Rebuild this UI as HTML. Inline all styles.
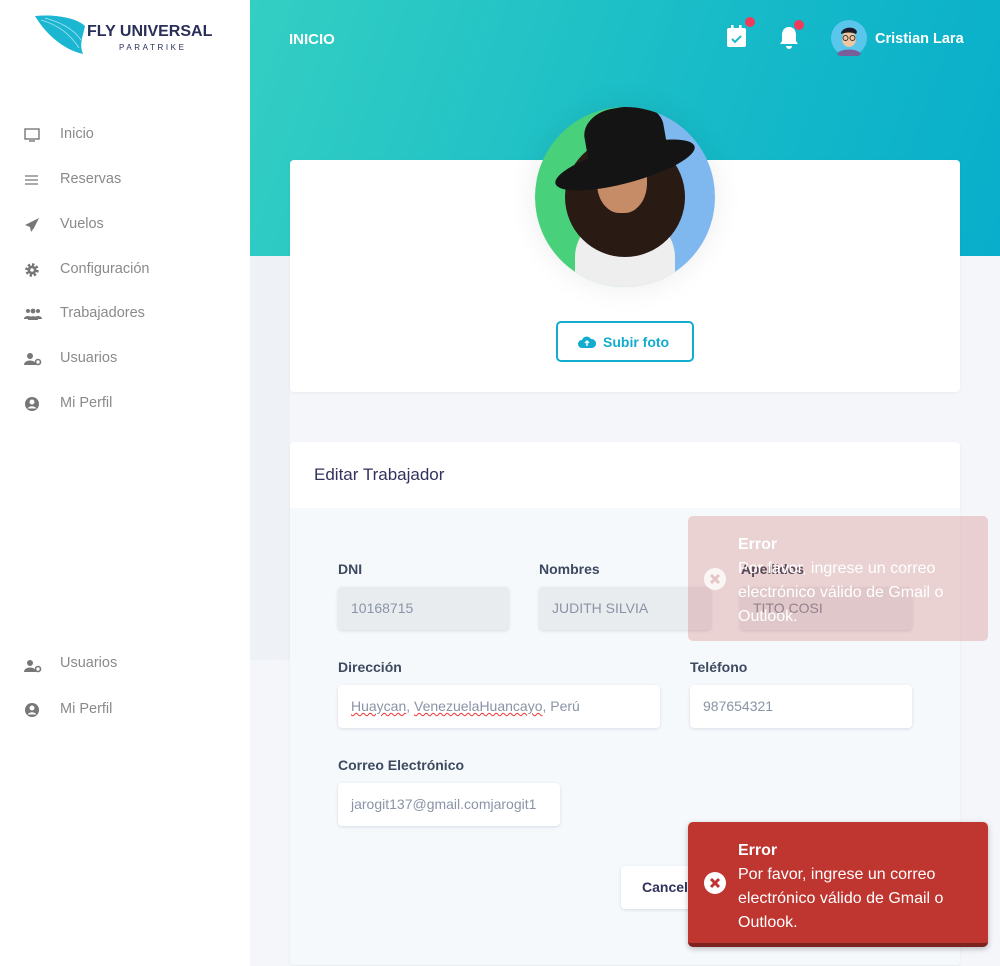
<!DOCTYPE html>
<html><head><meta charset="utf-8"><style>
*{box-sizing:border-box;margin:0;padding:0}
body{width:1000px;height:966px;overflow:hidden;font-family:"Liberation Sans",sans-serif;background:#f4f6fa;position:relative}
.side{position:absolute;left:0;top:0;width:250px;height:966px;background:#fff}
.nav{position:absolute;left:0;font-size:14.5px;color:#8a8a8a}
.nav svg{position:absolute;left:24px;top:-6px}
.nav span{position:absolute;left:60px;top:-7px;white-space:nowrap}
.hdr{position:absolute;left:250px;top:0;width:750px;height:256px;background:linear-gradient(110deg,#34cfc3,#16bac8 60%,#08aecb)}
.card{position:absolute;background:#fff;border-radius:4px;box-shadow:0 1px 3px rgba(0,0,0,.05)}
.lbl{position:absolute;font-size:14px;color:#3e4a60;font-weight:600}
.inp{position:absolute;height:43px;border-radius:4px;background:#fff;box-shadow:0 1px 3px rgba(50,50,93,.15);font-size:14px;color:#8a94a6;padding:13px 13px;white-space:nowrap;overflow:hidden}
.dis{background:#e9ecef}
.toast{position:absolute;left:688px;width:300px;border-radius:5px;color:#fff;font-size:16px;line-height:24px;padding:17px 20px 10px 50px}
.toast b{display:block}
.xi{position:absolute;left:15px;top:50%;margin-top:-12px}
</style></head><body>
<div class="side">
 <svg style="position:absolute;left:35px;top:14px" width="52" height="40" viewBox="0 0 52 40"><path d="M0 2 C20 0 42 4 50 12 C48 22 44 30 48 40 C30 36 12 22 0 2Z" fill="#1bb6d2"/><path d="M6 6 C20 10 34 18 44 34 M10 4 C24 8 38 14 46 26" stroke="#a9e3ee" stroke-width=".8" fill="none"/></svg>
 <div style="position:absolute;left:87px;top:23px;font-weight:700;font-size:16px;color:#2a2f5a">FLY UNIVERSAL</div>
 <div style="position:absolute;left:119px;top:43px;font-size:8px;color:#2a2f5a;letter-spacing:2.6px">PARATRIKE</div>
 <div class="nav" style="top:133px"><svg width="16" height="16" viewBox="0 0 16 16"><rect x="1" y="2" width="14" height="10" fill="none" stroke="#777" stroke-width="1.4"/><path d="M5 14h6" stroke="#777" stroke-width="1.4"/></svg><span>Inicio</span></div>
 <div class="nav" style="top:178px"><svg width="16" height="16" viewBox="0 0 16 16"><path d="M1 4h13M1 8h13M1 12h13" stroke="#777" stroke-width="1.3"/></svg><span>Reservas</span></div>
 <div class="nav" style="top:223px"><svg width="16" height="16" viewBox="0 0 16 16"><path d="M15 1L1 8l5 2 1 5 3-4z" fill="#777"/></svg><span>Vuelos</span></div>
 <div class="nav" style="top:268px"><svg width="16" height="16" viewBox="0 0 16 16"><circle cx="8" cy="8" r="5" fill="none" stroke="#777" stroke-width="3.5" stroke-dasharray="2.2 1.7"/><circle cx="8" cy="8" r="4.5" fill="#777"/><circle cx="8" cy="8" r="1.8" fill="#fff"/></svg><span>Configuración</span></div>
 <div class="nav" style="top:312px"><svg width="18" height="16" viewBox="0 0 18 16"><circle cx="4" cy="5" r="2" fill="#777"/><circle cx="14" cy="5" r="2" fill="#777"/><circle cx="9" cy="5" r="2.4" fill="#777"/><path d="M0 13c0-4 8-4 8 0zM10 13c0-4 8-4 8 0zM4 14c0-5 10-5 10 0z" fill="#777"/></svg><span>Trabajadores</span></div>
 <div class="nav" style="top:357px"><svg width="18" height="16" viewBox="0 0 18 16"><circle cx="6" cy="5" r="3" fill="#777"/><path d="M0 14c0-6 12-6 12 0z" fill="#777"/><circle cx="14" cy="11" r="2.5" fill="none" stroke="#777" stroke-width="1.6"/></svg><span>Usuarios</span></div>
 <div class="nav" style="top:402px"><svg width="16" height="16" viewBox="0 0 16 16"><circle cx="8" cy="8" r="7" fill="#777"/><circle cx="8" cy="6" r="2.5" fill="#fff"/><path d="M3.5 12.5c2-3 7-3 9 0" fill="#fff"/></svg><span>Mi Perfil</span></div>
 <div class="nav" style="top:664px"><svg width="18" height="16" viewBox="0 0 18 16"><circle cx="6" cy="5" r="3" fill="#777"/><path d="M0 14c0-6 12-6 12 0z" fill="#777"/><circle cx="14" cy="11" r="2.5" fill="none" stroke="#777" stroke-width="1.6"/></svg><span style="top:-9px">Usuarios</span></div>
 <div class="nav" style="top:708px"><svg width="16" height="16" viewBox="0 0 16 16"><circle cx="8" cy="8" r="7" fill="#777"/><circle cx="8" cy="6" r="2.5" fill="#fff"/><path d="M3.5 12.5c2-3 7-3 9 0" fill="#fff"/></svg><span>Mi Perfil</span></div>
</div>
<div style="position:absolute;left:250px;top:256px;width:40px;height:404px;background:#eef1f6"></div>
<div class="hdr"></div>
<div style="position:absolute;left:289px;top:31px;color:#fff;font-weight:700;font-size:15px">INICIO</div>
<svg style="position:absolute;left:726px;top:25px" width="22" height="24" viewBox="0 0 22 24"><rect x="1" y="3" width="19" height="19" rx="2" fill="#fff"/><rect x="5" y="0" width="2.5" height="5" fill="#fff"/><rect x="13" y="0" width="2.5" height="5" fill="#fff"/><path d="M6 14l3 3 6-6" stroke="#1bbcc8" stroke-width="2" fill="none"/></svg>
<div style="position:absolute;left:745px;top:17px;width:10px;height:10px;border-radius:50%;background:#ef3b5c"></div>
<svg style="position:absolute;left:779px;top:26px" width="22" height="24" viewBox="0 0 22 24"><path d="M10 1c-5 0-7 4-7 8v6l-2 3h18l-2-3V9c0-4-2-8-7-8z" fill="#fff"/><path d="M7 20a3 3 0 0 0 6 0z" fill="#fff"/></svg>
<div style="position:absolute;left:794px;top:20px;width:10px;height:10px;border-radius:50%;background:#ef3b5c"></div>
<svg style="position:absolute;left:831px;top:20px" width="36" height="36" viewBox="0 0 36 36"><circle cx="18" cy="18" r="18" fill="#5ac6ec"/><path d="M6 34c3-6 21-6 24 0a18 18 0 0 1-24 0z" fill="#7a5e9a"/><ellipse cx="18" cy="19" rx="7" ry="8" fill="#f1c7a0"/><path d="M10 14c0-7 14-9 16-2l-1 2c-4-2-10-2-15 0z" fill="#1c1c2a"/><circle cx="14.5" cy="18" r="2.5" fill="none" stroke="#333" stroke-width="1"/><circle cx="21.5" cy="18" r="2.5" fill="none" stroke="#333" stroke-width="1"/></svg>
<div style="position:absolute;left:875px;top:31px;color:#fff;font-weight:700;font-size:14.5px">Cristian Lara</div>

<div class="card" style="left:290px;top:160px;width:670px;height:232px"></div>
<div style="position:absolute;left:535px;top:107px;width:180px;height:180px;border-radius:50%;overflow:hidden;background:linear-gradient(90deg,#48d07a 45%,#7fb8ee 55%);box-shadow:0 0 30px rgba(0,0,0,.08)">
 <div style="position:absolute;left:40px;top:110px;width:100px;height:80px;background:#eee;border-radius:40px 40px 0 0"></div>
 <div style="position:absolute;left:30px;top:30px;width:120px;height:120px;border-radius:50%;background:#2a1a14"></div>
 <div style="position:absolute;left:62px;top:40px;width:50px;height:66px;border-radius:45%;background:#c68c68"></div>
 <div style="position:absolute;left:18px;top:40px;width:144px;height:36px;border-radius:50%;background:#141414;transform:rotate(-15deg)"></div>
 <div style="position:absolute;left:50px;top:0px;width:80px;height:60px;border-radius:40% 40% 10% 10%;background:#141414;transform:rotate(-10deg)"></div>
</div>
<div style="position:absolute;left:556px;top:321px;width:138px;height:41px;border:2px solid #12acce;border-radius:5px;color:#12acce;font-weight:700;font-size:14px;padding:11px 0 0 45px">Subir foto</div>
<svg style="position:absolute;left:578px;top:335px" width="18" height="14" viewBox="0 0 18 14"><path d="M4 13a4 4 0 0 1 0-8 5 5 0 0 1 9-1 4.5 4.5 0 0 1 1 9z" fill="#12acce"/><path d="M9 11V6M7 8l2-2 2 2" stroke="#fff" stroke-width="1.4" fill="none"/></svg>

<div class="card" style="left:290px;top:442px;width:670px;height:523px;background:#f6f9fc;overflow:hidden">
 <div style="height:66px;background:#fff;padding:23px 24px;font-size:17px;color:#32325d">Editar Trabajador</div>
</div>
<div class="lbl" style="left:338px;top:561px">DNI</div>
<div class="lbl" style="left:539px;top:561px">Nombres</div>
<div class="lbl" style="left:741px;top:561px">Apellidos</div>
<div class="inp dis" style="left:338px;top:587px;width:171px">10168715</div>
<div class="inp dis" style="left:539px;top:587px;width:172px">JUDITH SILVIA</div>
<div class="inp dis" style="left:740px;top:587px;width:172px">TITO COSI</div>
<div class="lbl" style="left:338px;top:659px">Dirección</div>
<div class="lbl" style="left:690px;top:659px">Teléfono</div>
<div class="inp" style="left:338px;top:685px;width:322px"><span style="text-decoration:underline wavy #e33;text-decoration-thickness:1px">Huaycan</span>, <span style="text-decoration:underline wavy #e33;text-decoration-thickness:1px">VenezuelaHuancayo</span>, Perú</div>
<div class="inp" style="left:690px;top:685px;width:222px">987654321</div>
<div class="lbl" style="left:338px;top:757px">Correo Electrónico</div>
<div class="inp" style="left:338px;top:783px;width:222px">jarogit137@gmail.comjarogit1</div>
<div class="inp" style="left:621px;top:866px;width:140px;color:#32325d;font-weight:600;padding-left:21px">Cancelar</div>

<div class="toast" style="top:516px;height:125px;background:rgba(191,53,48,.2)"><svg class="xi" width="24" height="24" viewBox="0 0 24 24"><circle cx="12" cy="12" r="11" fill="#fff" fill-opacity=".8"/><path d="M8 8l8 8M16 8l-8 8" stroke="#e5c4c4" stroke-width="3"/></svg><b>Error</b>Por favor, ingrese un correo electrónico válido de Gmail o Outlook.</div>
<div class="toast" style="top:822px;height:125px;background:#bf3530;border-bottom:4px solid #7c2320;box-shadow:0 2px 6px rgba(0,0,0,.25)"><svg class="xi" width="24" height="24" viewBox="0 0 24 24"><circle cx="12" cy="12" r="11" fill="#fff"/><path d="M8 8l8 8M16 8l-8 8" stroke="#bf3530" stroke-width="3"/></svg><b>Error</b>Por favor, ingrese un correo electrónico válido de Gmail o Outlook.</div>
</body></html>
